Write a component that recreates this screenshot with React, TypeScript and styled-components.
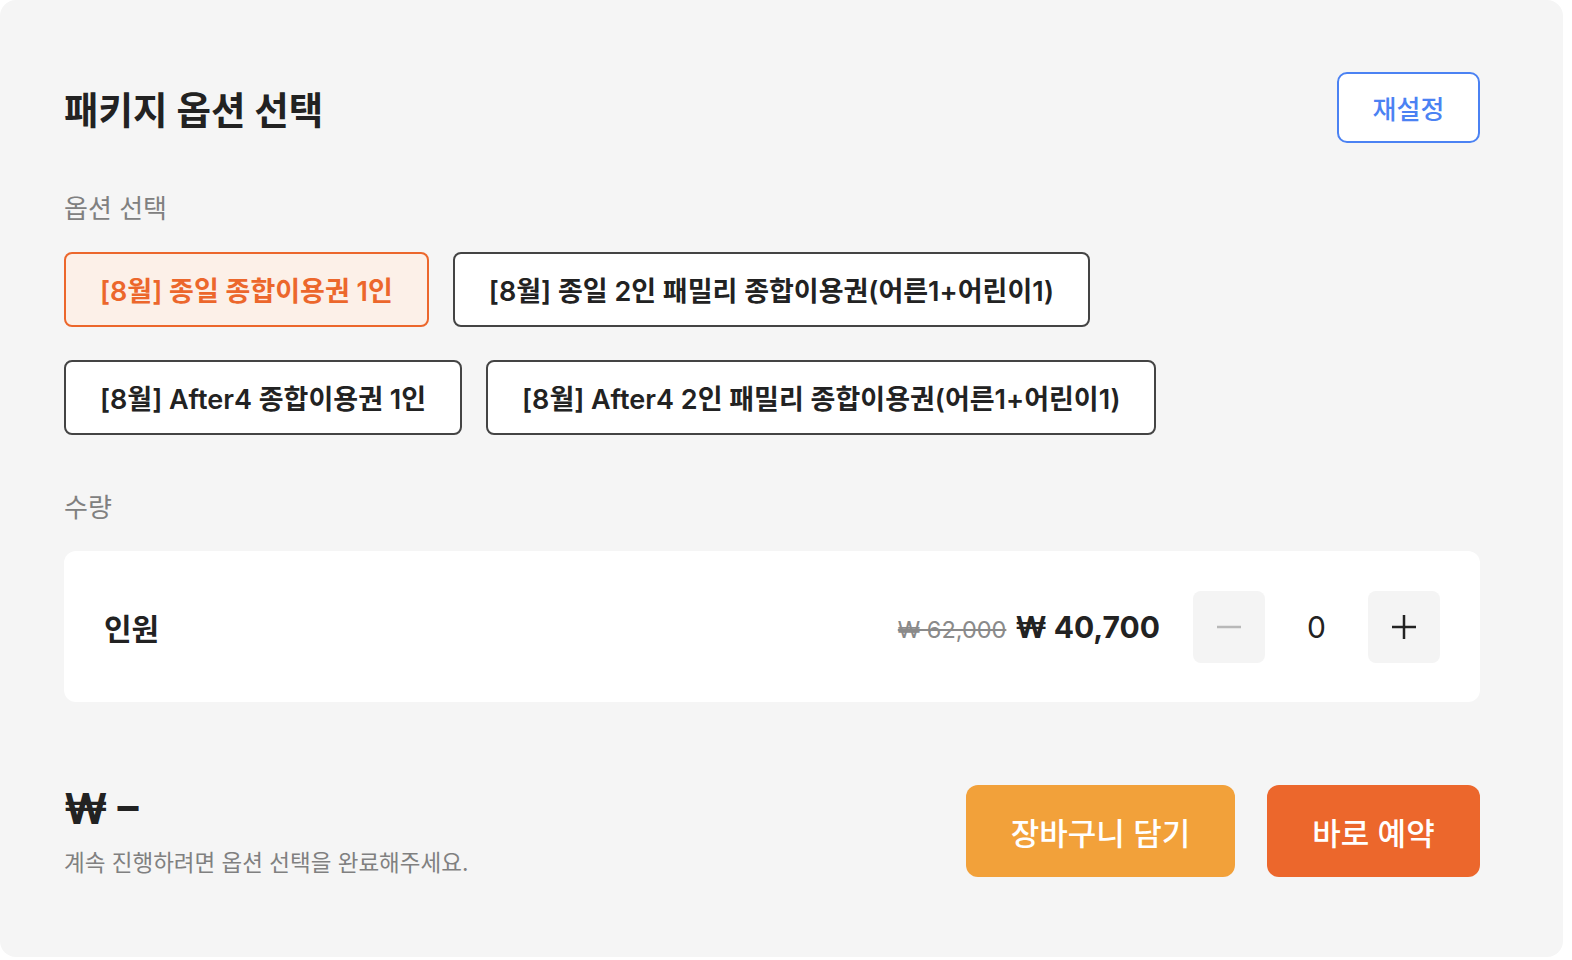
import React, { useState } from "react";
import styled, { createGlobalStyle } from "styled-components";

const GlobalStyle = createGlobalStyle`
  * { box-sizing: border-box; }
  html, body { margin: 0; padding: 0; background: #ffffff; }
  body {
    font-family: Inter, "Noto Sans CJK KR", "Noto Sans", sans-serif;
    color: #222222;
  }
`;

const Panel = styled.section`
  width: 1563px;
  min-height: 957px;
  background: #f5f5f5;
  border-radius: 16px;
  padding: 72px 83px 80px 64px;
  display: flex;
  flex-direction: column;
`;

const Header = styled.div`
  display: flex;
  align-items: center;
  justify-content: space-between;
  height: 71px;
`;

const Title = styled.h1`
  margin: 0;
  font-size: 37.5px;
  font-weight: 700;
  letter-spacing: 0;
  color: #222222;
`;

const ResetButton = styled.button`
  width: 143px;
  height: 71px;
  border: 2px solid #4b82f3;
  border-radius: 10px;
  background: #ffffff;
  color: #4b82f3;
  font-family: inherit;
  font-size: 26px;
  font-weight: 500;
  cursor: pointer;
`;

const SectionLabel = styled.div<{ $top: number }>`
  margin-top: ${(p) => p.$top}px;
  height: 34px;
  line-height: 34px;
  font-size: 26px;
  color: #808080;
`;

const OptionGrid = styled.div`
  margin-top: 26px;
  display: flex;
  flex-direction: column;
  gap: 33px;
`;

const OptionRow = styled.div`
  display: flex;
  gap: 24px;
`;

const OptionButton = styled.button<{ $active?: boolean }>`
  height: 75px;
  padding: 0 34px;
  border-radius: 8px;
  border: 2px solid ${(p) => (p.$active ? "#ec672c" : "#444444")};
  background: ${(p) => (p.$active ? "#fcf0e8" : "#ffffff")};
  color: ${(p) => (p.$active ? "#ec672c" : "#222222")};
  font-family: inherit;
  font-size: 27px;
  font-weight: 600;
  letter-spacing: 0;
  white-space: nowrap;
  cursor: pointer;
`;

const Card = styled.div`
  margin-top: 26px;
  height: 151px;
  background: #ffffff;
  border-radius: 12px;
  padding: 0 40px;
  display: flex;
  align-items: center;
  justify-content: space-between;
`;

const CardLabel = styled.div`
  font-size: 30px;
  font-weight: 600;
  color: #222222;
`;

const Controls = styled.div`
  display: flex;
  align-items: center;
`;

const Prices = styled.div`
  display: flex;
  align-items: baseline;
  gap: 9px;
  margin-right: 33px;
`;

const OldPrice = styled.span`
  font-size: 23.5px;
  color: #8a8a8a;
  text-decoration: line-through;
`;

const NewPrice = styled.span`
  font-size: 30px;
  font-weight: 700;
  color: #222222;
`;

const StepButton = styled.button<{ $disabled?: boolean }>`
  width: 72px;
  height: 72px;
  border: none;
  border-radius: 8px;
  background: #f4f4f4;
  color: ${(p) => (p.$disabled ? "#b8b8b8" : "#222222")};
  display: flex;
  align-items: center;
  justify-content: center;
  padding: 0;
  cursor: pointer;
`;

const Count = styled.div`
  width: 103px;
  text-align: center;
  font-size: 30px;
  color: #222222;
`;

const Footer = styled.div`
  margin-top: 83px;
  display: flex;
  justify-content: space-between;
  align-items: flex-start;
`;

const Summary = styled.div`
  display: flex;
  flex-direction: column;
  padding-top: 1px;
`;

const Total = styled.div`
  font-size: 42px;
  font-weight: 700;
  line-height: 46px;
  color: #222222;
`;

const Hint = styled.div`
  margin-top: 13px;
  font-size: 22.5px;
  color: #808080;
`;

const Actions = styled.div`
  display: flex;
  gap: 32px;
`;

const ActionButton = styled.button<{ $color: string; $width: number }>`
  width: ${(p) => p.$width}px;
  height: 92px;
  border: none;
  border-radius: 12px;
  background: ${(p) => p.$color};
  color: #ffffff;
  font-family: inherit;
  font-size: 31px;
  font-weight: 500;
  cursor: pointer;
`;

const options = [
  ["[8월] 종일 종합이용권 1인", "[8월] 종일 2인 패밀리 종합이용권(어른1+어린이1)"],
  ["[8월] After4 종합이용권 1인", "[8월] After4 2인 패밀리 종합이용권(어른1+어린이1)"],
];

export default function App() {
  const [selected, setSelected] = useState(options[0][0]);
  const [count, setCount] = useState(0);
  return (
    <>
      <GlobalStyle />
      <Panel>
        <Header>
          <Title>패키지 옵션 선택</Title>
          <ResetButton onClick={() => setCount(0)}>재설정</ResetButton>
        </Header>
        <SectionLabel $top={49}>옵션 선택</SectionLabel>
        <OptionGrid>
          {options.map((row, i) => (
            <OptionRow key={i}>
              {row.map((o) => (
                <OptionButton key={o} $active={o === selected} onClick={() => setSelected(o)}>
                  {o}
                </OptionButton>
              ))}
            </OptionRow>
          ))}
        </OptionGrid>
        <SectionLabel $top={56}>수량</SectionLabel>
        <Card>
          <CardLabel>인원</CardLabel>
          <Controls>
            <Prices>
              <OldPrice>₩ 62,000</OldPrice>
              <NewPrice>₩ 40,700</NewPrice>
            </Prices>
            <StepButton $disabled={count === 0} onClick={() => setCount(Math.max(0, count - 1))} aria-label="감소">
              <svg width="28" height="28" viewBox="0 0 28 28">
                <line x1="2" y1="14" x2="26" y2="14" stroke="currentColor" strokeWidth="2.5" />
              </svg>
            </StepButton>
            <Count>{count}</Count>
            <StepButton onClick={() => setCount(count + 1)} aria-label="증가">
              <svg width="28" height="28" viewBox="0 0 28 28">
                <line x1="2" y1="14" x2="26" y2="14" stroke="currentColor" strokeWidth="2.5" />
                <line x1="14" y1="2" x2="14" y2="26" stroke="currentColor" strokeWidth="2.5" />
              </svg>
            </StepButton>
          </Controls>
        </Card>
        <Footer>
          <Summary>
            <Total>₩ –</Total>
            <Hint>계속 진행하려면 옵션 선택을 완료해주세요.</Hint>
          </Summary>
          <Actions>
            <ActionButton $color="#f2a13a" $width={269}>장바구니 담기</ActionButton>
            <ActionButton $color="#ec672c" $width={213}>바로 예약</ActionButton>
          </Actions>
        </Footer>
      </Panel>
    </>
  );
}
